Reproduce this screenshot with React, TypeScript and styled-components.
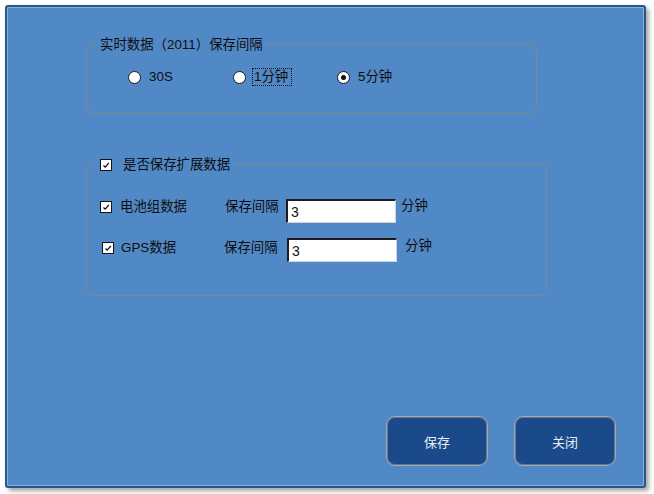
import React from "react";
import styled, { createGlobalStyle } from "styled-components";

const Global = createGlobalStyle`
  html, body { margin: 0; padding: 0; background: #ffffff; }
  body { font-family: "Liberation Sans", "Noto Sans CJK SC", sans-serif; }
  #root { padding: 5px; width: 654px; height: 494px; box-sizing: border-box; }
`;

const Window = styled.div`
  box-sizing: border-box;
  width: 641px;
  height: 483px;
  background: #5189c6;
  border: 2px solid #2b5688;
  border-radius: 3px;
  box-shadow: inset 0 0 0 1px #89afdb, 3px 3px 4px rgba(0, 0, 0, 0.35);
  display: flex;
  flex-direction: column;
  padding: 29px 28px 20px 79px;
`;

const Group = styled.fieldset<{ $w: number; $mt?: number }>`
  margin: ${(p) => p.$mt ?? 0}px 0 0 0;
  padding: 0;
  min-width: 0;
  box-sizing: border-box;
  width: ${(p) => p.$w}px;
  border: 1px solid #858789;
  border-radius: 8px;
`;

const Legend = styled.legend`
  margin-left: 9px;
  padding: 0 4px;
  font-size: 13.4px;
  line-height: 17px;
  color: #0e0e10;
`;

const LegendInner = styled.span`
  display: inline-flex;
  align-items: center;
  gap: 11px;
`;

const RadioRow = styled.div`
  display: grid;
  grid-template-columns: 105px 104px auto;
  padding: 14px 0 26px 41px;
  height: 20px;
`;

const Option = styled.label`
  display: inline-flex;
  align-items: center;
  gap: 6px;
  font-size: 13.4px;
  color: #0e0e10;
`;

const Circle = styled.span<{ $on?: boolean }>`
  box-sizing: border-box;
  width: 13px;
  height: 13px;
  border-radius: 50%;
  border: 1px solid #1a1a1a;
  background: #fff;
  display: inline-flex;
  align-items: center;
  justify-content: center;
  &::after {
    content: "";
    width: 5px;
    height: 5px;
    border-radius: 50%;
    background: ${(p) => (p.$on ? "#111" : "transparent")};
  }
`;

const OptText = styled.span<{ $focus?: boolean }>`
  line-height: 16px;
  border: 1px dotted ${(p) => (p.$focus ? "#111" : "transparent")};
  padding: 0 3px 0 1px;
`;

const Rows = styled.div`
  display: flex;
  flex-direction: column;
  gap: 15px;
  padding: 25px 0 33px 0;
`;

const Row = styled.div<{ $cols: string; $pl: number; $dy: number }>`
  display: grid;
  grid-template-columns: ${(p) => p.$cols};
  padding-left: ${(p) => p.$pl}px;
  align-items: start;
  height: 24px;
  font-size: 13.4px;
  color: #0e0e10;
  --dy: ${(p) => p.$dy}px;
`;

const Text = styled.span<{ $off?: number }>`
  line-height: 16px;
  white-space: nowrap;
  margin-top: calc(var(--dy, 0px) + ${(p) => p.$off ?? 0}px);
`;

const Box = styled.span`
  box-sizing: border-box;
  width: 12px;
  height: 12px;
  background: #fff;
  border: 1px solid #111;
  display: inline-flex;
  margin-top: calc(var(--dy, 0px) + 2px);
  svg { display: block; }
`;

const LegendBox = styled(Box)`
  margin-top: 0;
`;

const Field = styled.input`
  box-sizing: border-box;
  width: 110px;
  height: 24px;
  margin: 0;
  padding: 1px 0 0 3px;
  background: #fff;
  border-style: solid;
  border-width: 2px 1px 1px 2px;
  border-color: #1c1c1c #cfd2d6 #cfd2d6 #1c1c1c;
  font-family: "Liberation Sans", sans-serif;
  font-size: 14px;
  color: #111;
  outline: none;
`;

const Footer = styled.div`
  margin-top: auto;
  display: flex;
  justify-content: flex-end;
  gap: 26px;
`;

const Button = styled.button`
  box-sizing: border-box;
  width: 102px;
  height: 50px;
  background: #1b4a8b;
  border: 1px solid #a7abb0;
  border-radius: 9px;
  box-shadow: inset 0 0 0 1px #5d7598;
  color: #e8eef6;
  font-family: "Noto Sans CJK SC", sans-serif;
  font-size: 13px;
  padding: 0;
`;

const Check = () => (
  <svg width="10" height="10" viewBox="0 0 10 10">
    <path d="M2.5 5.5 L4.2 7.2 L7.8 3" fill="none" stroke="#111" strokeWidth="1.2" />
  </svg>
);

export default function App() {
  return (
    <>
      <Global />
      <Window>
        <Group $w={451}>
          <Legend>实时数据（2011）保存间隔</Legend>
          <RadioRow>
            <Option>
              <Circle />
              <OptText>30S</OptText>
            </Option>
            <Option>
              <Circle />
              <OptText $focus>1分钟</OptText>
            </Option>
            <Option>
              <Circle $on />
              <OptText>5分钟</OptText>
            </Option>
          </RadioRow>
        </Group>

        <Group $w={461} $mt={42}>
          <Legend>
            <LegendInner>
              <LegendBox>
                <Check />
              </LegendBox>
              是否保存扩展数据
            </LegendInner>
          </Legend>
          <Rows>
            <Row $cols="20px 105px 61px 115px auto" $pl={13} $dy={0}>
              <Box>
                <Check />
              </Box>
              <Text>电池组数据</Text>
              <Text>保存间隔</Text>
              <Field defaultValue="3" />
              <Text $off={-1}>分钟</Text>
            </Row>
            <Row $cols="19px 103px 63px 118px auto" $pl={15} $dy={2}>
              <Box>
                <Check />
              </Box>
              <Text>GPS数据</Text>
              <Text>保存间隔</Text>
              <Field defaultValue="3" />
              <Text $off={-2}>分钟</Text>
            </Row>
          </Rows>
        </Group>

        <Footer>
          <Button>保存</Button>
          <Button>关闭</Button>
        </Footer>
      </Window>
    </>
  );
}
